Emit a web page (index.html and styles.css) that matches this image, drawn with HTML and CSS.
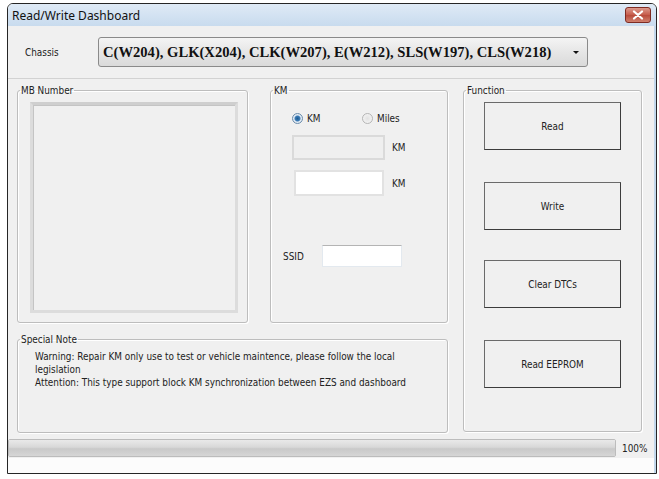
FILE: index.html
```html
<!DOCTYPE html>
<html lang="en">
<head>
    <meta charset="UTF-8"/>
    <title>Read/Write Dashboard</title>
    <link rel="stylesheet" href="styles.css">
</head>
<body>
<div class="window">
    <div class="titlebar">
        <span class="title">Read/Write Dashboard</span>
        <span class="close-btn">
            <svg width="12" height="10" viewBox="0 0 12 10">
                <path d="M2 1.5 L10 8.5 M10 1.5 L2 8.5" stroke="#fff" stroke-width="2.2" stroke-linecap="round"/>
            </svg>
        </span>
    </div>
    <div class="client">
        <!-- 車種選択 -->
        <div class="chassis-row">
            <span class="chassis-label">Chassis</span>
            <div class="combo">
                <span class="combo-text">C(W204), GLK(X204), CLK(W207), E(W212), SLS(W197), CLS(W218)</span>
                <span class="combo-arrow"></span>
            </div>
        </div>

        <div class="main">
            <div class="left-col">
                <div class="top-row">
                    <fieldset class="group group-mb">
                        <legend>MB Number</legend>
                        <div class="listbox"></div>
                    </fieldset>

                    <fieldset class="group group-km">
                        <legend>KM</legend>
                        <div class="radio-row">
                            <label class="radio checked"><span class="radio-dot"></span>KM</label>
                            <label class="radio"><span class="radio-dot"></span>Miles</label>
                        </div>
                        <div class="km-row km-row__first">
                            <span class="textbox textbox--disabled"></span>
                            <span class="unit">KM</span>
                        </div>
                        <div class="km-row km-row__second">
                            <span class="textbox textbox--white"></span>
                            <span class="unit">KM</span>
                        </div>
                        <div class="ssid-row">
                            <span class="ssid-label">SSID</span>
                            <span class="textbox textbox--ssid"></span>
                        </div>
                    </fieldset>
                </div>

                <fieldset class="group group-note">
                    <legend>Special Note</legend>
                    <div class="note-body">
                        <p class="note-text">Warning: Repair KM only use to test or vehicle maintence, please follow the local legislation</p>
                        <p class="note-text">Attention: This type support block KM synchronization between EZS and dashboard</p>
                    </div>
                </fieldset>
            </div>

            <fieldset class="group group-func">
                <legend>Function</legend>
                <div class="btn-list">
                    <div class="btn">Read</div>
                    <div class="btn btn-write">Write</div>
                    <div class="btn btn-clear">Clear DTCs</div>
                    <div class="btn btn-eeprom">Read EEPROM</div>
                </div>
            </fieldset>
        </div>

        <div class="progress-row">
            <div class="progress"><div class="progress-fill"></div></div>
            <span class="progress-text">100%</span>
        </div>
        <div class="status"></div>
    </div>
</div>
</body>
</html>
```

FILE: styles.css
```css
body {
    margin: 0;
    background: #fff;
    font-family: "DejaVu Sans", "Liberation Sans", sans-serif;
    font-stretch: condensed;
    font-size: 9.9px;
    color: #222;
}

.window {
    margin: 3px 0 0 7px;
    width: 650px;
    box-sizing: border-box;
    border: 1px solid #262626;
    border-radius: 6px 6px 0 0;
    box-shadow: 0 2px 0 #9cc2e5;
    overflow: hidden;
}

.titlebar {
    height: 22px;
    display: flex;
    align-items: center;
    justify-content: space-between;
    padding: 0 5px 0 4px;
    background: linear-gradient(#dfeaf6, #c8dbee);
}

.title {
    font-family: "Noto Sans", sans-serif;
    font-stretch: normal;
    font-size: 12px;
    color: #111;
}

.close-btn {
    width: 26px;
    height: 16px;
    box-sizing: border-box;
    border: 1px solid #7e2b22;
    border-radius: 3px;
    background: linear-gradient(#dc9a8d, #c65a4a 50%, #b94a3a 51%, #d0806e);
    display: flex;
    align-items: center;
    justify-content: center;
}

.client {
    background: #f0f0f0;
    border-right: 2px solid #c3d8ec;
}

.chassis-row {
    height: 52px;
    display: flex;
    align-items: center;
    padding-left: 17px;
    border-bottom: 1px solid #d2d2d2;
}

.chassis-label {
    width: 73px;
}

.combo {
    width: 490px;
    height: 30px;
    box-sizing: border-box;
    border: 1px solid #8a8a8a;
    border-radius: 3px;
    background: linear-gradient(#f4f4f4, #e6e6e6 50%, #dadada);
    display: flex;
    align-items: center;
    justify-content: space-between;
    padding: 0 5px 0 4px;
}

.combo-text {
    font-family: "Liberation Serif", "Times New Roman", serif;
    font-stretch: normal;
    font-weight: bold;
    font-size: 14.6px;
    color: #111;
}

.combo-arrow {
    width: 0;
    height: 0;
    border-left: 3px solid transparent;
    border-right: 3px solid transparent;
    border-top: 3px solid #111;
    margin-right: 3px;
}

.main {
    display: flex;
    gap: 15px;
    padding: 5px 0 0 9px;
}

.left-col {
    width: 431px;
    display: flex;
    flex-direction: column;
    gap: 10px;
}

.top-row {
    display: flex;
    justify-content: space-between;
}

.group {
    margin: 0;
    padding: 0;
    min-width: 0;
    box-sizing: border-box;
    border: 1px solid #bdbdbd;
    border-radius: 3px;
    box-shadow: inset 1px 1px 0 #fff, 1px 1px 0 #fff;
}

.group legend {
    padding: 0 1px;
    margin-left: 2px;
    line-height: 13px;
    color: #222;
}

.group-mb {
    width: 231px;
    height: 239px;
}

.listbox {
    width: 208px;
    height: 211px;
    margin: 5px 0 0 12px;
    box-sizing: border-box;
    border: 3px solid #dcdcdc;
    border-top-color: #cfcfcf;
    box-shadow: inset 1px 1px 0 #c4c4c4;
    background: #f0f0f0;
}

.group-km {
    width: 178px;
    height: 239px;
}

.radio-row {
    display: flex;
    margin: 15px 0 0 21px;
    height: 12px;
    align-items: center;
}

.radio {
    display: flex;
    align-items: center;
    gap: 4px;
    width: 70px;
}

.radio-dot {
    width: 11px;
    height: 11px;
    box-sizing: border-box;
    border-radius: 50%;
    border: 1px solid #b5b5b5;
    background: radial-gradient(circle, #e2e2e2, #f8f8f8);
}

.radio.checked .radio-dot {
    border-color: #6b8cab;
    background: radial-gradient(circle, #1d5a8e 0, #3d7db8 2.5px, #e4ecf4 3.5px, #d8e2ec);
}

.km-row {
    display: flex;
    align-items: center;
}

.km-row__first {
    margin: 11px 0 0 21px;
    gap: 7px;
}

.km-row__second {
    margin: 10px 0 0 23px;
    gap: 8px;
}

.textbox {
    display: block;
    box-sizing: border-box;
}

.textbox--disabled {
    width: 93px;
    height: 25px;
    border: 2px solid #dadada;
    background: #efefef;
}

.textbox--white {
    width: 90px;
    height: 26px;
    border: 2px solid #e2e2e2;
    background: #fff;
}

.ssid-row {
    display: flex;
    align-items: center;
    margin: 49px 0 0 12px;
}

.ssid-label {
    width: 39px;
}

.textbox--ssid {
    width: 80px;
    height: 22px;
    border: 1px solid #e3e9ef;
    border-top-color: #b4b4b4;
    background: #fff;
}

.group-note {
    width: 431px;
    height: 100px;
}

.note-body {
    padding: 4px 0 0 17px;
}

.note-text {
    margin: 0;
    width: 385px;
    line-height: 13px;
}

.group-func {
    width: 179px;
    height: 348px;
}

.btn-list {
    padding: 5px 0 0 20px;
}

.btn {
    width: 137px;
    height: 48px;
    box-sizing: border-box;
    border: 1px solid #6a6a6a;
    border-right-color: #3c3c3c;
    border-bottom-color: #3c3c3c;
    background: #f0f0f0;
    display: flex;
    align-items: center;
    justify-content: center;
}

.btn-write {
    margin-top: 32px;
}

.btn-clear {
    margin-top: 30px;
}

.btn-eeprom {
    margin-top: 32px;
}

.progress-row {
    display: flex;
    align-items: center;
    padding-top: 5px;
    height: 20px;
}

.progress {
    width: 608px;
    height: 18px;
    box-sizing: border-box;
    border: 1px solid #bcbcbc;
    border-radius: 2px;
    background: #e6e6e6;
}

.progress-fill {
    height: 100%;
    background: linear-gradient(#e9e9e9, #d8d8d8 45%, #c9c9c9 55%, #d6d6d6);
}

.progress-text {
    margin-left: 6px;
}

.status {
    height: 15px;
    background: #fcfcfc;
}
```
